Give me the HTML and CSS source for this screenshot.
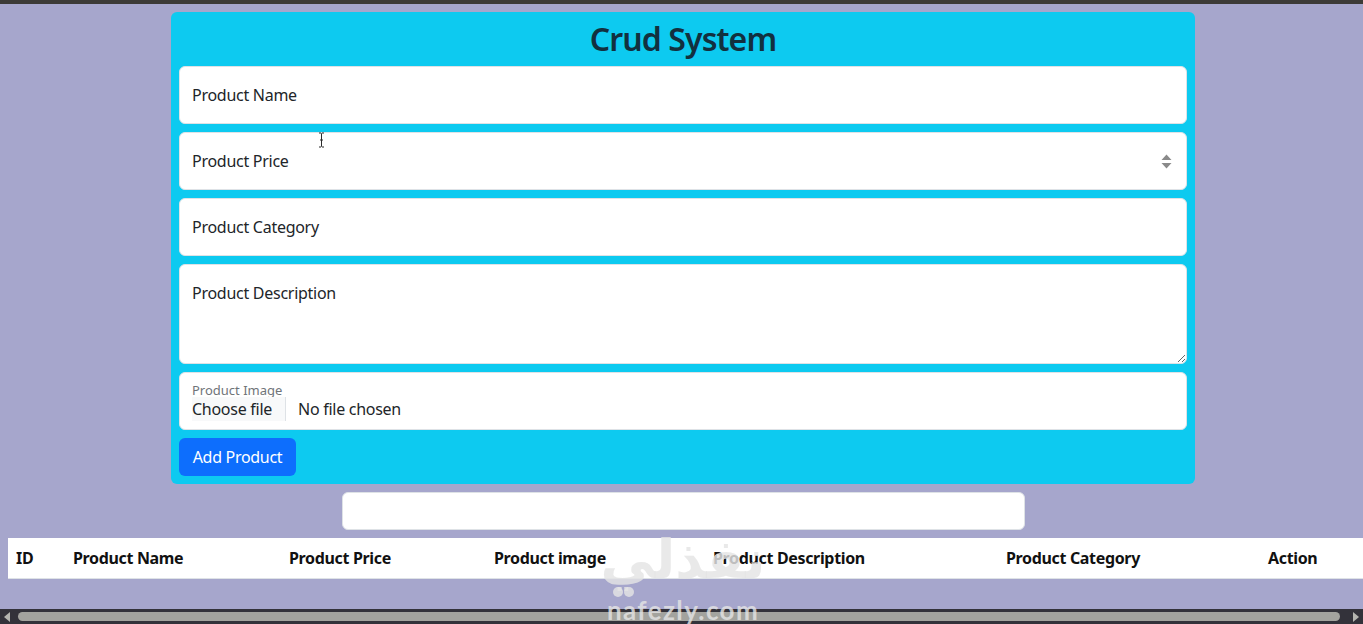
FILE: index.html
```html
<!DOCTYPE html>
<html lang="en">
<head>
<meta charset="utf-8">
<title>Crud System</title>
<link rel="stylesheet" href="styles.css">
</head>
<body>
<div class="topbar"></div>
<main class="page">
  <form class="card">
    <h1 class="title">Crud System</h1>
    <div class="field"><input class="control" type="text" id="name"><label class="float" for="name">Product Name</label></div>
    <div class="field"><input class="control" type="text" id="price"><label class="float" for="price">Product Price</label>
      <svg class="spin" width="11" height="15" viewBox="0 0 11 15"><path d="M5.5 0.5 10.5 6H0.5Z M0.5 9H10.5L5.5 14.5Z" fill="#8a8a8a"/></svg>
    </div>
    <div class="field"><input class="control" type="text" id="cat"><label class="float" for="cat">Product Category</label></div>
    <div class="field"><textarea class="control area" id="desc"></textarea><label class="float" for="desc">Product Description</label></div>
    <div class="filefield">
      <label class="smalllabel">Product Image</label>
      <div class="filerow"><span class="choose">Choose file</span><span class="nofile">No file chosen</span></div>
    </div>
    <div class="actions"><button class="btn" type="button">Add Product</button></div>
  </form>
  <div class="searchwrap"><input class="search" type="text"></div>
  <table class="table">
    <thead>
      <tr>
        <th class="c-id">ID</th>
        <th class="c-name">Product Name</th>
        <th class="c-price">Product Price</th>
        <th class="c-img">Product image</th>
        <th class="c-desc">Product Description</th>
        <th class="c-cat">Product Category</th>
        <th class="c-act">Action</th>
      </tr>
    </thead>
  </table>
</main>
<div class="scrollbar">
  <svg class="arrow" width="8" height="10" viewBox="0 0 8 10"><path d="M7 0V10L1 5Z" fill="#b5b5b0"/></svg>
  <div class="track"><div class="thumb"></div></div>
  <svg class="arrow" width="8" height="10" viewBox="0 0 8 10"><path d="M1 0V10L7 5Z" fill="#b5b5b0"/></svg>
</div>
<svg class="ibeam" width="7" height="16" viewBox="0 0 7 16" aria-hidden="true"><path d="M1 1H3L3.5 1.5 4 1H6M3.5 2V14M1 15H3L3.5 14.5 4 15H6M2 8H5" fill="none" stroke="#2a2a2a" stroke-width="1"/></svg>
<div class="watermark" aria-hidden="true">
  <div class="wm-ar" dir="rtl" lang="ar">نفذلي</div>
  <div class="wm-dots"><i></i><i></i></div>
  <div class="wm-en">nafezly.com</div>
</div>
</body>
</html>
```

FILE: styles.css
```css
* { box-sizing: border-box; }
html, body { margin: 0; height: 100%; overflow: hidden; }
body {
  display: flex;
  flex-direction: column;
  background: #a6a6cc;
  color: #212529;
  font-family: "Noto Sans", "Open Sans", sans-serif;
  font-size: 16px;
  line-height: 24px;
  letter-spacing: -0.27px;
}
.topbar { height: 4px; background: #3c3b37; flex: none; }
.page {
  flex: 1;
  min-height: 0;
  overflow: hidden;
  padding: 8px 0 0 8px;
}
.card {
  width: 1024px;
  margin: 0 0 8px 163px;
  padding: 8px;
  background: #0dcaf0;
  border-radius: 6px;
  display: flex;
  flex-direction: column;
  gap: 8px;
}
.title {
  margin: 0;
  height: 38px;
  line-height: 38px;
  text-align: center;
  font-size: 32px;
  font-weight: 600;
  letter-spacing: -0.9px;
  color: #12303f;
}
.field { position: relative; display: flex; }
.control {
  display: block;
  width: 100%;
  height: 58px;
  padding: 0 12px;
  margin: 0;
  background: #fff;
  border: 1px solid #dee2e6;
  border-radius: 6px;
  font: inherit;
  outline: none;
}
.area { height: 100px; resize: vertical; }
.float {
  position: absolute;
  left: 13px;
  top: 17px;
  color: #212529;
  pointer-events: none;
}
.spin { position: absolute; right: 15px; top: 22px; }
.filefield {
  height: 58px;
  padding: 8px 12px 0;
  background: #fff;
  border: 1px solid #dee2e6;
  border-radius: 6px;
  display: flex;
  flex-direction: column;
}
.smalllabel { font-size: 13px; line-height: 18px; color: #6f7479; letter-spacing: 0; }
.filerow { display: flex; align-items: stretch; height: 24px; margin-top: -2px; }
.choose { border-right: 1px solid #dee2e6; width: 94px; white-space: nowrap; background: #f8f9fa; }
.nofile { padding-left: 12px; }
.actions { display: flex; }
.btn {
  width: 117px;
  height: 38px;
  padding: 0;
  background: #0d6efd;
  color: #fff;
  border: 0;
  border-radius: 6px;
  font: inherit;
  letter-spacing: -0.3px;
}
.searchwrap { display: flex; justify-content: center; margin-left: -4px; margin-bottom: 8px; }
.search {
  width: 683px;
  height: 38px;
  background: #fff;
  border: 1px solid #dee2e6;
  border-radius: 6px;
  outline: none;
}
.table {
  width: 1363px;
  table-layout: fixed;
  border-collapse: separate;
  border-spacing: 0;
  background: #fff;
}
.table th {
  padding: 8px;
  height: 41px;
  text-align: left;
  font-weight: 700;
  letter-spacing: -0.34px;
  color: #111;
  border-bottom: 1px solid #dee2e6;
  white-space: nowrap;
}
.c-id { width: 57px; }
.c-name { width: 216px; }
.c-price { width: 205px; }
.c-img { width: 219px; }
.c-desc { width: 293px; }
.c-cat { width: 262px; }
.c-act { width: 111px; }
.scrollbar {
  flex: none;
  height: 15px;
  background: #33323a;
  display: flex;
  align-items: center;
  gap: 2px;
  padding: 0 3px;
}
.arrow { flex: none; }
.track { flex: 1; padding-right: 10px; padding-left: 5px; }
.thumb { height: 9px; border-radius: 5px; background: #a3a39e; }
.ibeam { position: absolute; left: 318px; top: 132px; }
.watermark {
  position: absolute;
  left: 583px;
  top: 532px;
  width: 200px;
  color: rgba(228, 228, 228, 0.82);
  pointer-events: none;
  text-align: center;
  letter-spacing: 0;
}
.wm-ar {
  height: 55px;
  line-height: 55px;
  font-family: "DejaVu Sans", sans-serif;
  font-weight: 700;
  font-size: 54px;
  white-space: nowrap;
}
.wm-dots { display: flex; gap: 1px; height: 10px; padding-left: 30px; }
.wm-dots i { width: 10px; height: 10px; border-radius: 50%; background: rgba(228, 228, 228, 0.82); }
.wm-en {
  font-family: "Lato", sans-serif;
  font-weight: 700;
  font-size: 26px;
  line-height: 24px;
  letter-spacing: 1.4px;
  white-space: nowrap;
  margin-top: 1px;
}
```
